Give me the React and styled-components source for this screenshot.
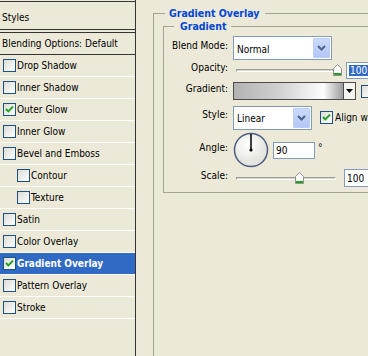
import styled, { createGlobalStyle } from "styled-components";

const GlobalStyle = createGlobalStyle`
  html, body {
    margin: 0;
    padding: 0;
    background: #ece9d8;
    overflow: hidden;
  }
  body {
    font-family: "DejaVu Sans Condensed", Tahoma, "Liberation Sans", sans-serif;
    font-size: 10px;
    color: #000;
  }
`;

const Window = styled.div`
  display: flex;
  width: 368px;
  height: 356px;
  overflow: hidden;
  background: #ece9d8;
`;

const StylesPanel = styled.div`
  width: 135px;
  flex-shrink: 0;
  display: flex;
  flex-direction: column;
  padding-top: 1px;
  border-right: 1px solid #333;
`;

const PanelHeader = styled.div`
  height: 24px;
  display: flex;
  align-items: center;
  padding: 3px 0 0 2px;
  border-top: 1px solid #333;
  border-bottom: 1px solid #333;
`;

const BlendingRow = styled.div`
  margin-top: 2px;
  height: 21px;
  display: flex;
  align-items: center;
  padding-left: 2px;
  border-top: 1px solid #333;
  border-bottom: 1px solid #333;
`;

const EffectRow = styled.div`
  height: 21px;
  display: flex;
  align-items: center;
  gap: 1px;
  padding-left: ${(p) => (p.$indent ? 17 : 3)}px;
  border-bottom: 1px solid #fff;
  background: ${(p) => (p.$selected ? "#316ac5" : "transparent")};
  color: ${(p) => (p.$selected ? "#fff" : "#000")};
  font-weight: ${(p) => (p.$selected ? "bold" : "normal")};
`;

const Box = styled.span`
  width: 13px;
  height: 13px;
  flex-shrink: 0;
  box-sizing: border-box;
  border: 1px solid #1c5180;
  background: linear-gradient(135deg, #dcdcd7, #fff);
  display: flex;
  align-items: center;
  justify-content: center;
  margin-left: ${(p) => p.$ml || 0}px;
`;

function CheckBox({ checked, ml }) {
  return (
    <Box $ml={ml}>
      {checked && (
        <svg width="11" height="11" viewBox="0 0 11 11">
          <path
            d="M2 5 L4.3 7.4 L9 2.6"
            fill="none"
            stroke="#21a121"
            strokeWidth="2"
          />
        </svg>
      )}
    </Box>
  );
}

const Content = styled.div`
  flex: 1;
  min-width: 0;
  padding: 7px 0 0 17px;
  overflow: hidden;
`;

const GroupBox = styled.fieldset`
  margin: 0 0 0 ${(p) => p.$ml || 0}px;
  padding: ${(p) => p.$pad || "0"};
  min-width: 0;
  width: ${(p) => p.$w}px;
  height: ${(p) => (p.$h ? `${p.$h}px` : "auto")};
  border: 1px solid #a5a597;
  box-sizing: border-box;
`;

const Legend = styled.legend`
  margin-left: ${(p) => p.$ml}px;
  padding: ${(p) => p.$pad};
  font-weight: bold;
  font-size: 10.5px;
  line-height: 13px;
  color: #0046d5;
`;

const Row = styled.div`
  display: grid;
  grid-template-columns: 64px auto;
  column-gap: 5px;
  align-items: center;
  height: ${(p) => p.$h}px;
  margin-top: ${(p) => p.$mt || 0}px;
`;

const Label = styled.label`
  text-align: right;
  white-space: nowrap;
  margin-bottom: 6px;
`;

const Controls = styled.div`
  display: flex;
  align-items: center;
  white-space: nowrap;
`;

const Select = styled.div`
  width: ${(p) => p.$w}px;
  height: 24px;
  box-sizing: border-box;
  border: 1px solid #7f9db9;
  background: #fff;
  display: flex;
`;

const SelectValue = styled.span`
  flex: 1;
  display: flex;
  align-items: center;
  padding: 2px 0 0 3px;
`;

const DropButton = styled.span`
  width: 17px;
  margin: 1px;
  box-sizing: border-box;
  border: 1px solid #bccdf5;
  border-radius: 1px;
  background: linear-gradient(#cbdafc, #b3c7f6);
  display: flex;
  align-items: center;
  justify-content: center;
`;

function Dropdown({ value, w }) {
  return (
    <Select $w={w}>
      <SelectValue>{value}</SelectValue>
      <DropButton>
        <svg width="9" height="6" viewBox="0 0 9 6">
          <path
            d="M1 1 L4.5 4.5 L8 1"
            fill="none"
            stroke="#4d6185"
            strokeWidth="2"
          />
        </svg>
      </DropButton>
    </Select>
  );
}

const SliderWrap = styled.div`
  position: relative;
  width: 103px;
  height: 17px;
  flex-shrink: 0;
  display: flex;
  align-items: center;
`;

const Track = styled.div`
  margin-left: 3px;
  width: 100px;
  height: 3px;
  box-sizing: border-box;
  border-top: 1px solid #9d9d95;
  border-left: 1px solid #9d9d95;
  border-bottom: 1px solid #fff;
  border-right: 1px solid #fff;
  background: #dcdad0;
`;

const Thumb = styled.svg`
  position: absolute;
  top: 2px;
  left: ${(p) => p.$pos}px;
`;

function Slider({ pos }) {
  return (
    <SliderWrap>
      <Track />
      <Thumb $pos={pos} width="9" height="12" viewBox="0 0 9 12">
        <path
          d="M0.5 4.5 L4.5 0.5 L8.5 4.5 V11.5 H0.5 Z"
          fill="#fbfbf9"
          stroke="#8c9490"
        />
        <rect x="1" y="9" width="7" height="2" fill="#21a121" />
      </Thumb>
    </SliderWrap>
  );
}

const NumberInput = styled.div`
  width: ${(p) => p.$w}px;
  height: ${(p) => p.$h || 17}px;
  margin-left: ${(p) => p.$ml || 0}px;
  flex-shrink: 0;
  box-sizing: border-box;
  border: 1px solid #7f9db9;
  background: #fff;
  display: flex;
  align-items: center;
  padding-left: 2px;
`;

const Highlight = styled.span`
  background: #316ac5;
  color: #fff;
  padding: 0 1px;
  line-height: 11px;
`;

const Swatch = styled.div`
  width: 123px;
  height: 18px;
  box-sizing: border-box;
  border: 1px solid #4c4c4c;
  display: flex;
  flex-shrink: 0;
`;

const GradientFill = styled.div`
  flex: 1;
  background: linear-gradient(
    90deg,
    #b2b2b2 0%,
    #d0d0d0 40%,
    #fdfdfd 82%,
    #9c9c9c 100%
  );
`;

const SwatchArrow = styled.div`
  width: 11px;
  border-left: 1px solid #4c4c4c;
  background: #f4f4f0;
  display: flex;
  align-items: center;
  justify-content: center;
`;

const CheckText = styled.span`
  margin-left: 2px;
`;

const Degree = styled.span`
  margin: 0 0 6px 3px;
`;

const Dial = styled.svg`
  margin-right: 4px;
  flex-shrink: 0;
`;

const effects = [
  { name: "Drop Shadow" },
  { name: "Inner Shadow" },
  { name: "Outer Glow", checked: true },
  { name: "Inner Glow" },
  { name: "Bevel and Emboss" },
  { name: "Contour", indent: true },
  { name: "Texture", indent: true },
  { name: "Satin" },
  { name: "Color Overlay" },
  { name: "Gradient Overlay", checked: true, selected: true },
  { name: "Pattern Overlay" },
  { name: "Stroke" },
];

export default function App() {
  return (
    <Window>
      <GlobalStyle />
      <StylesPanel>
        <PanelHeader>Styles</PanelHeader>
        <BlendingRow>Blending Options: Default</BlendingRow>
        {effects.map((e) => (
          <EffectRow key={e.name} $indent={e.indent} $selected={e.selected}>
            <CheckBox checked={e.checked} />
            <span>{e.name}</span>
          </EffectRow>
        ))}
      </StylesPanel>

      <Content>
        <GroupBox $w={260} $h={400}>
          <Legend $ml={11} $pad="0 6px 0 4px">
            Gradient Overlay
          </Legend>
          <GroupBox $ml={9} $w={240} $pad="3px 0 5px 0">
            <Legend $ml={10} $pad="0 5px 0 6px">
              Gradient
            </Legend>

            <Row $h={24}>
              <Label>Blend Mode:</Label>
              <Controls>
                <Dropdown value="Normal" w={99} />
              </Controls>
            </Row>

            <Row $h={17} $mt={2}>
              <Label>Opacity:</Label>
              <Controls>
                <Slider pos={100} />
                <NumberInput $w={30} $ml={10}>
                  <Highlight>100</Highlight>
                </NumberInput>
              </Controls>
            </Row>

            <Row $h={18} $mt={3}>
              <Label>Gradient:</Label>
              <Controls>
                <Swatch>
                  <GradientFill />
                  <SwatchArrow>
                    <svg width="7" height="4" viewBox="0 0 7 4">
                      <path d="M0 0 H7 L3.5 4 Z" fill="#000" />
                    </svg>
                  </SwatchArrow>
                </Swatch>
                <CheckBox ml={5} />
              </Controls>
            </Row>

            <Row $h={25} $mt={5}>
              <Label>Style:</Label>
              <Controls>
                <Dropdown value="Linear" w={79} />
                <CheckBox checked ml={8} />
                <CheckText>Align with Layer</CheckText>
              </Controls>
            </Row>

            <Row $h={36} $mt={2}>
              <Label>Angle:</Label>
              <Controls>
                <Dial width="36" height="36" viewBox="0 0 36 36">
                  <defs>
                    <radialGradient id="dialFill" cx="40%" cy="35%" r="70%">
                      <stop offset="0%" stopColor="#ffffff" />
                      <stop offset="100%" stopColor="#deded6" />
                    </radialGradient>
                  </defs>
                  <circle
                    cx="18"
                    cy="18"
                    r="16.5"
                    fill="url(#dialFill)"
                    stroke="#4f5d86"
                    strokeWidth="1.5"
                  />
                  <line
                    x1="18"
                    y1="18"
                    x2="18"
                    y2="2"
                    stroke="#000"
                    strokeWidth="1.5"
                  />
                  <circle cx="18" cy="18" r="1.6" fill="#000" />
                </Dial>
                <NumberInput $w={42} $h={17}>
                  90
                </NumberInput>
                <Degree>°</Degree>
              </Controls>
            </Row>

            <Row $h={18} $mt={1}>
              <Label>Scale:</Label>
              <Controls>
                <Slider pos={62} />
                <NumberInput $w={30} $ml={8} $h={18}>
                  100
                </NumberInput>
              </Controls>
            </Row>
          </GroupBox>
        </GroupBox>
      </Content>
    </Window>
  );
}
